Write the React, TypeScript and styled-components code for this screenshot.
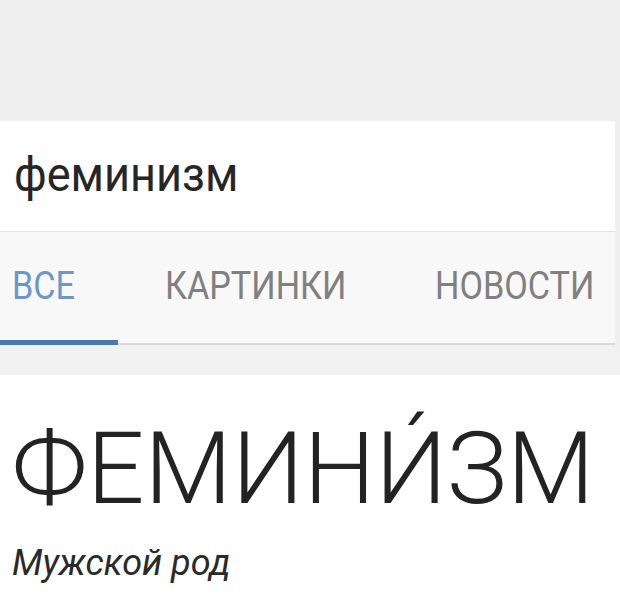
import React from "react";
import styled, { createGlobalStyle } from "styled-components";

const Global = createGlobalStyle`
  html, body {
    margin: 0;
    padding: 0;
    background: #ffffff;
    font-family: Roboto, "Noto Sans", sans-serif;
  }
`;

const tabs = [
  { label: "ВСЕ", width: 118, pad: 12, active: true },
  { label: "КАРТИНКИ", width: 305, pad: 47, active: false },
  { label: "НОВОСТИ", width: 192, pad: 12, active: false },
];

const App: React.FC = () => {
  return (
    <Page>
      <Global />
      <TopArea />
      <SearchBar>
        <Squish $size={49} $scale={0.92}>феминизм</Squish>
      </SearchBar>
      <TabBar>
        {tabs.map((t) => (
          <Tab key={t.label} $active={t.active} $width={t.width} $pad={t.pad}>
            <Squish $size={38} $scale={0.9}>{t.label}</Squish>
          </Tab>
        ))}
      </TabBar>
      <Gap />
      <Content>
        <Heading>ФЕМИНИ&#769;ЗМ</Heading>
        <Gender>Мужской род</Gender>
      </Content>
    </Page>
  );
};

const Page = styled.div`
  width: 620px;
  height: 609px;
  overflow: hidden;
  display: flex;
  flex-direction: column;
  background: #efefef;
`;

const TopArea = styled.div`
  height: 121px;
  flex-shrink: 0;
  background: #efefef;
`;

const SearchBar = styled.div`
  height: 111px;
  flex-shrink: 0;
  margin-right: 5px;
  box-sizing: border-box;
  border-bottom: 1px solid #e2e2e2;
  background: #ffffff;
  display: flex;
  align-items: center;
  padding: 0 0 4px 14px;
  color: #262626;
`;

const Squish = styled.span<{ $size: number; $scale: number }>`
  display: inline-block;
  font-size: ${(p) => p.$size}px;
  line-height: 1;
  transform: scaleX(${(p) => p.$scale});
  transform-origin: left center;
  white-space: nowrap;
`;

const TabBar = styled.div`
  height: 113px;
  flex-shrink: 0;
  margin-right: 5px;
  box-sizing: border-box;
  background: #f8f8f8;
  border-bottom: 2px solid #d8d8d8;
  display: flex;
`;

const Tab = styled.div<{ $active: boolean; $width: number; $pad: number }>`
  box-sizing: border-box;
  flex-shrink: 0;
  display: flex;
  align-items: center;
  width: ${(p) => p.$width}px;
  padding-left: ${(p) => p.$pad}px;
  margin-bottom: -2px;
  border-bottom: 5px solid ${(p) => (p.$active ? "#4a79b2" : "transparent")};
  color: ${(p) => (p.$active ? "#6b98c8" : "#808080")};
  overflow: hidden;
`;

const Gap = styled.div`
  height: 30px;
  flex-shrink: 0;
  background: #f1f1f1;
`;

const Content = styled.div`
  flex: 1;
  background: #ffffff;
  padding: 43px 0 0 12px;
  color: #232323;
`;

const Heading = styled.div`
  font-family: Roboto, sans-serif;
  font-weight: 300;
  font-size: 101px;
  line-height: 1;
  white-space: nowrap;
`;

const Gender = styled.div`
  margin-top: 26px;
  font-style: italic;
  font-size: 36px;
  line-height: 1;
  color: #2a2a2a;
`;

export default App;
